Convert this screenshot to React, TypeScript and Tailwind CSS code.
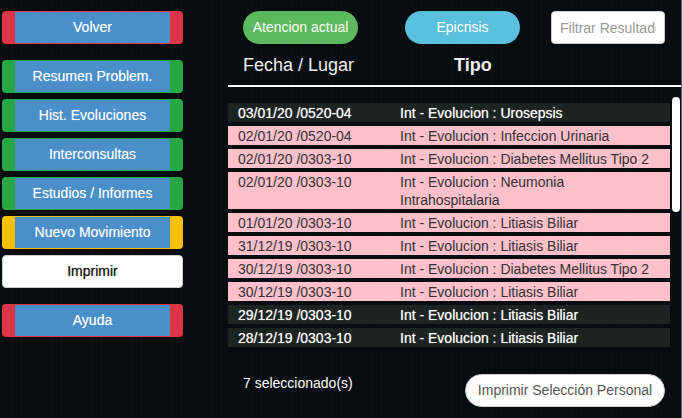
import React from 'react';

type Row = { fecha: string; tipo: string; sel: boolean };

const rows: Row[] = [
  { fecha: '03/01/20 /0520-04', tipo: 'Int - Evolucion : Urosepsis', sel: false },
  { fecha: '02/01/20 /0520-04', tipo: 'Int - Evolucion : Infeccion Urinaria', sel: true },
  { fecha: '02/01/20 /0303-10', tipo: 'Int - Evolucion : Diabetes Mellitus Tipo 2', sel: true },
  { fecha: '02/01/20 /0303-10', tipo: 'Int - Evolucion : Neumonia Intrahospitalaria', sel: true },
  { fecha: '01/01/20 /0303-10', tipo: 'Int - Evolucion : Litiasis Biliar', sel: true },
  { fecha: '31/12/19 /0303-10', tipo: 'Int - Evolucion : Litiasis Biliar', sel: true },
  { fecha: '30/12/19 /0303-10', tipo: 'Int - Evolucion : Diabetes Mellitus Tipo 2', sel: true },
  { fecha: '30/12/19 /0303-10', tipo: 'Int - Evolucion : Litiasis Biliar', sel: true },
  { fecha: '29/12/19 /0303-10', tipo: 'Int - Evolucion : Litiasis Biliar', sel: false },
  { fecha: '28/12/19 /0303-10', tipo: 'Int - Evolucion : Litiasis Biliar', sel: false },
];

const SideButton = ({ label, edge, className = '' }: { label: string; edge: string; className?: string }) => (
  <div className={`h-[33px] rounded-[4px] px-[13px] py-px flex ${edge} ${className}`}>
    <div className="flex-1 bg-[#4a8fca] flex items-center justify-center text-white text-[14px] [text-shadow:0_0_1px_rgba(255,255,255,0.4)]">
      {label}
    </div>
  </div>
);

const App = () => {
  return (
    <div
      className="w-[682px] h-[418px] overflow-hidden flex bg-[repeating-linear-gradient(90deg,#04080a_0px,#0a1215_2px,#05090b_3px,#081013_5px)] border-r border-[#3d6d8a]"
      style={{ fontFamily: '"Liberation Sans", Arial, sans-serif' }}
    >
      {/* left menu */}
      <div className="w-[228px] pl-[2px] pt-[11px] flex flex-col">
        <div className="w-[181px] flex flex-col">
          <SideButton label="Volver" edge="bg-[#dc3545]" />
          <div className="mt-[16px] flex flex-col gap-[6px]">
            <SideButton label="Resumen Problem." edge="bg-[#28a745]" />
            <SideButton label="Hist. Evoluciones" edge="bg-[#28a745]" />
            <SideButton label="Interconsultas" edge="bg-[#28a745]" />
            <SideButton label="Estudios / Informes" edge="bg-[#28a745]" />
            <SideButton label="Nuevo Movimiento" edge="bg-[#ffc107]" />
            <div className="h-[33px] rounded-[4px] bg-white border border-[#ccc] flex items-center justify-center text-[14px] text-[#111] [text-shadow:0_0_1px_rgba(0,0,0,0.5)]">
              Imprimir
            </div>
          </div>
          <SideButton label="Ayuda" edge="bg-[#dc3545]" className="mt-[16px]" />
        </div>
      </div>

      {/* main */}
      <div className="flex-1 pt-[11px] flex flex-col">
        <div className="pl-[15px] flex items-center h-[33px]">
          <div className="w-[115px] h-[33px] rounded-full bg-[#5cb85c] text-white text-[14px] flex items-center justify-center">
            Atencion actual
          </div>
          <div className="ml-[47px] w-[115px] h-[33px] rounded-full bg-[#5bc0de] text-white text-[14px] flex items-center justify-center">
            Epicrisis
          </div>
          <input
            className="ml-[31px] w-[114px] h-[33px] rounded-[4px] bg-white border border-[#ccc] px-[8px] text-[14px] text-[#555] placeholder:text-[#999] outline-none"
            placeholder="Filtrar Resultados"
            style={{ fontFamily: '"Liberation Sans", Arial, sans-serif' }}
          />
        </div>

        <div className="mt-[10px] flex text-[18px] text-[#eee] leading-[22px]">
          <div className="pl-[15px] w-[226px]">Fecha / Lugar</div>
          <div className="font-bold">Tipo</div>
        </div>
        <div className="mt-[9px] h-[2px] bg-white" />

        <div className="mt-[10px] flex">
          <div className="w-[442px] pt-[6px] flex flex-col gap-[4px]">
            {rows.map((r, i) => (
              <div
                key={i}
                className={`flex text-[14px] leading-[18px] pt-px ${
                  r.sel
                    ? 'bg-[#ffc0cb] text-[#333]'
                    : 'bg-[#1b2420] text-white [text-shadow:0_0_1px_rgba(255,255,255,0.6)]'
                }`}
              >
                <div className="pl-[10px] w-[172px] shrink-0">{r.fecha}</div>
                <div className="flex-1 pr-[4px]">{r.tipo}</div>
              </div>
            ))}
          </div>
          <div className="ml-[2px] w-[8px]">
            <div className="h-[115px] rounded-full bg-white" />
          </div>
        </div>

        <div className="mt-[27px] flex items-center pl-[15px]">
          <div className="text-white text-[14px] w-[222px] -mt-[15px]">7 seleccionado(s)</div>
          <div className="w-[200px] h-[33px] rounded-full bg-white border border-[#ccc] text-[14px] text-[#555] flex items-center justify-center">
            Imprimir Selección Personal
          </div>
        </div>
      </div>
    </div>
  );
};

export default App;
